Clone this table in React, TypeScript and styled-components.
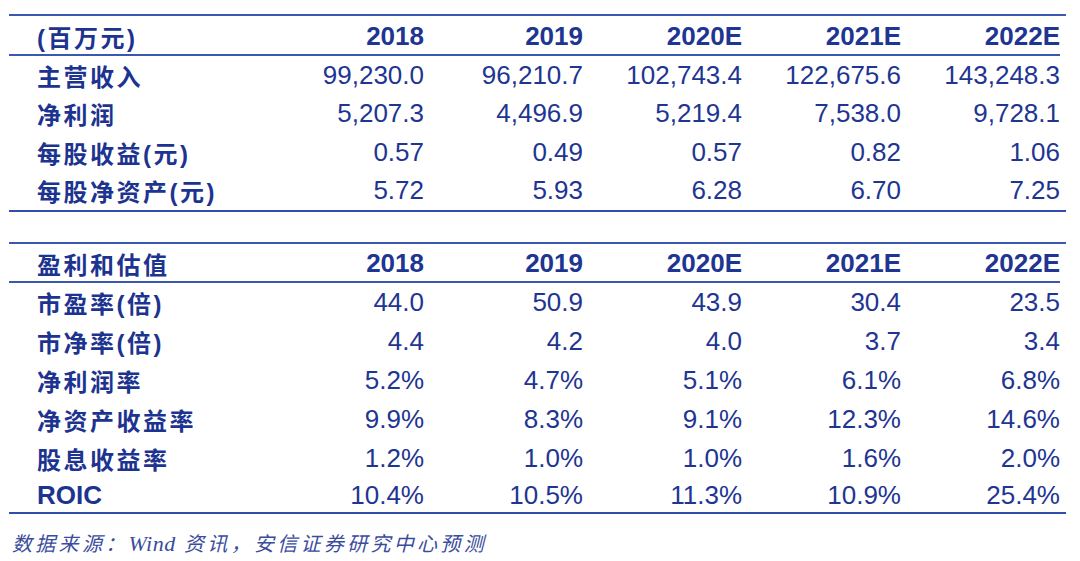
import React from "react";
import styled, { createGlobalStyle } from "styled-components";

const Global = createGlobalStyle`
  html, body { margin: 0; padding: 0; background: #ffffff; }
  body { font-family: "Liberation Sans", Arial, sans-serif; }
`;

const Page = styled.div`
  width: 1080px;
  height: 561px;
  padding: 14px 14px 0 9px;
  box-sizing: border-box;
  display: flex;
  flex-direction: column;
`;

const Section = styled.div<{ $gap?: number }>`
  display: grid;
  grid-template-columns: 256px repeat(5, 159px);
  width: 1057px;
  padding-right: 6px;
  box-sizing: border-box;
  border-top: 2px solid #3a58b2;
  border-bottom: 2px solid #2f4eac;
  margin-top: ${(p) => p.$gap ?? 0}px;
`;

const Row = styled.div<{ $h: number; $head?: boolean }>`
  display: contents;
  & > div {
    height: ${(p) => p.$h}px;
    ${(p) => (p.$head ? "border-bottom: 2px solid #3a58b2; padding-top: 2px; box-sizing: border-box;" : "")}
  }
`;

const Label = styled.div<{ $latin?: boolean }>`
  display: flex;
  align-items: center;
  padding-left: 28px;
  color: #1c3490;
  font-family: ${(p) =>
    p.$latin
      ? '"Liberation Sans", Arial, sans-serif'
      : '"Liberation Sans", "Noto Sans CJK SC", sans-serif'};
  font-weight: 700;
  font-size: ${(p) => (p.$latin ? 26 : 24)}px;
  letter-spacing: ${(p) => (p.$latin ? 0 : 2.5)}px;
  white-space: nowrap;
`;

const Cell = styled.div<{ $bold?: boolean }>`
  display: flex;
  align-items: center;
  justify-content: flex-end;
  color: #1e3592;
  font-family: "Liberation Sans", Arial, sans-serif;
  font-size: 26px;
  font-weight: ${(p) => (p.$bold ? 700 : 400)};
  white-space: nowrap;
`;

const Footer = styled.div`
  margin-top: 14px;
  padding-left: 3px;
  font-family: "Liberation Serif", "Noto Sans CJK SC", serif;
  font-style: italic;
  font-size: 20px;
  letter-spacing: 3.3px;
  color: #3a4c9c;
  white-space: nowrap;
`;

const Latin = styled.span`
  font-size: 22px;
  letter-spacing: 0.5px;
`;

type RowData = { label: string; latin?: boolean; values: string[]; h?: number };

const years = ["2018", "2019", "2020E", "2021E", "2022E"];

const top: RowData[] = [
  { label: "主营收入", values: ["99,230.0", "96,210.7", "102,743.4", "122,675.6", "143,248.3"] },
  { label: "净利润", values: ["5,207.3", "4,496.9", "5,219.4", "7,538.0", "9,728.1"] },
  { label: "每股收益(元)", values: ["0.57", "0.49", "0.57", "0.82", "1.06"] },
  { label: "每股净资产(元)", values: ["5.72", "5.93", "6.28", "6.70", "7.25"] },
];

const bottom: RowData[] = [
  { label: "市盈率(倍)", values: ["44.0", "50.9", "43.9", "30.4", "23.5"] },
  { label: "市净率(倍)", values: ["4.4", "4.2", "4.0", "3.7", "3.4"] },
  { label: "净利润率", values: ["5.2%", "4.7%", "5.1%", "6.1%", "6.8%"] },
  { label: "净资产收益率", values: ["9.9%", "8.3%", "9.1%", "12.3%", "14.6%"] },
  { label: "股息收益率", values: ["1.2%", "1.0%", "1.0%", "1.6%", "2.0%"] },
  { label: "ROIC", latin: true, values: ["10.4%", "10.5%", "11.3%", "10.9%", "25.4%"], h: 34 },
];

function Table({
  title,
  rows,
  gap,
  rowH,
  headH,
}: {
  title: string;
  rows: RowData[];
  gap?: number;
  rowH: number;
  headH: number;
}) {
  return (
    <Section $gap={gap}>
      <Row $h={headH} $head>
        <Label>{title}</Label>
        {years.map((y) => (
          <Cell key={y} $bold>
            {y}
          </Cell>
        ))}
      </Row>
      {rows.map((r) => (
        <Row key={r.label} $h={r.h ?? rowH}>
          <Label $latin={r.latin}>{r.label}</Label>
          {r.values.map((v, i) => (
            <Cell key={i}>{v}</Cell>
          ))}
        </Row>
      ))}
    </Section>
  );
}

export default function App() {
  return (
    <>
      <Global />
      <Page>
        <Table title="(百万元)" rows={top} rowH={38.5} headH={40} />
        <Table title="盈利和估值" rows={bottom} gap={30} rowH={39} headH={39} />
        <Footer>
          数据来源：<Latin>Wind</Latin> 资讯，安信证券研究中心预测
        </Footer>
      </Page>
    </>
  );
}
